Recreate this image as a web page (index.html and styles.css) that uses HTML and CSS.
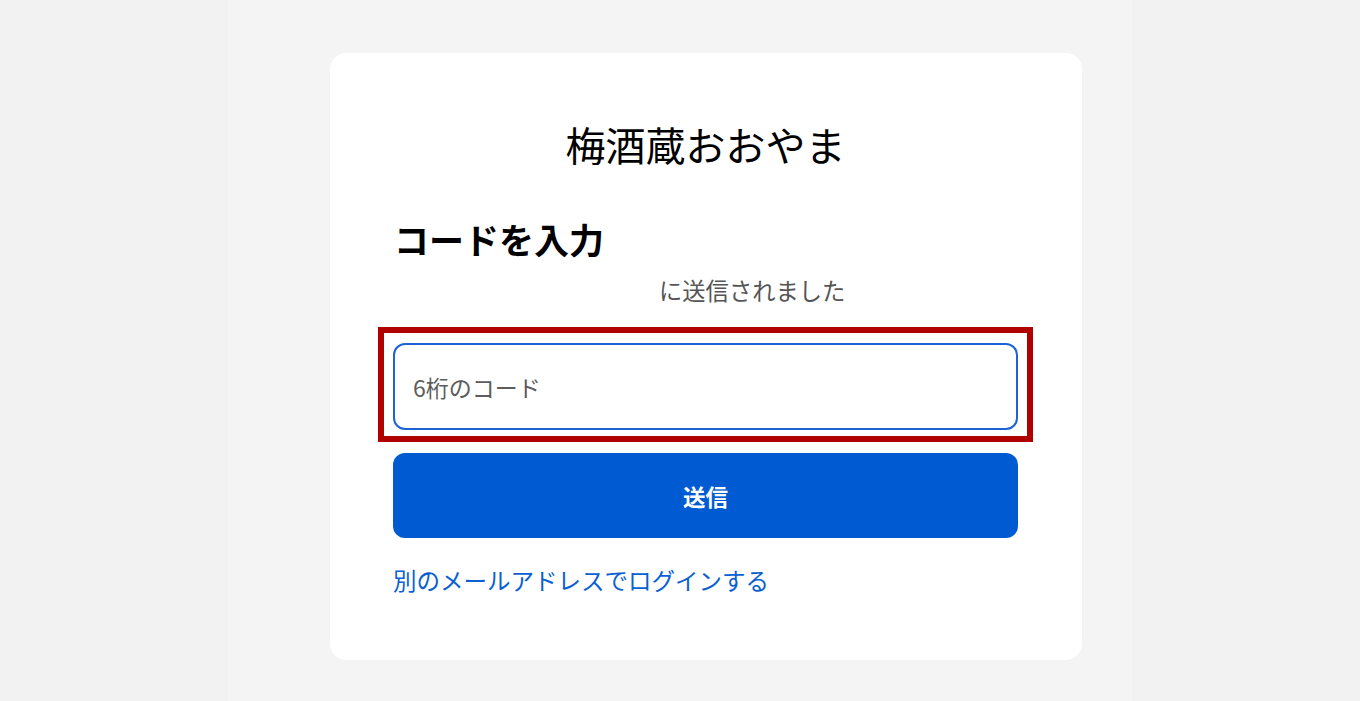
FILE: index.html
```html
<!DOCTYPE html>
<html lang="ja">
<head>
<meta charset="utf-8">
<title>梅酒蔵おおやま</title>
<link rel="stylesheet" href="styles.css">
</head>
<body>
<main class="column">
  <section class="card">
    <h1 class="shop">梅酒蔵おおやま</h1>
    <h2 class="heading">コードを入力</h2>
    <p class="sent"><span class="email">user@mail.jp</span>に送信されました</p>
    <div class="field">
      <input class="code-input" type="text" placeholder="6桁のコード">
      <span class="highlight"></span>
    </div>
    <button class="submit" type="button">送信</button>
    <a class="alt-link" href="#">別のメールアドレスでログインする</a>
  </section>
</main>
</body>
</html>
```
FILE: styles.css
```css
* { box-sizing: border-box; }
html, body { margin: 0; padding: 0; }
body {
  background: #f2f2f2;
  font-family: "Noto Sans CJK JP", "Noto Sans", sans-serif;
  color: #000;
}
.column {
  width: 904px;
  min-height: 701px;
  margin: 0 auto;
  background: #f4f4f4;
  padding-top: 53px;
}
.card {
  width: 752px;
  margin: 0 0 0 102px;
  background: #fff;
  border-radius: 16px;
  padding: 63px 64px 64px 63px;
  display: flex;
  flex-direction: column;
}
.shop {
  margin: 0;
  font-size: 40px;
  line-height: 56px;
  font-weight: 400;
  text-align: center;
}
.heading {
  margin: 43px 0 0;
  font-size: 35px;
  line-height: 48px;
  font-weight: 700;
  padding-left: 1px;
}
.sent {
  margin: 11px 0 0;
  font-size: 23.3px;
  line-height: 32px;
  color: #555;
}
.email {
  display: inline-block;
  width: 266px;
  color: transparent;
  white-space: nowrap;
  vertical-align: top;
  user-select: none;
}
.field {
  position: relative;
  margin-top: 37px;
}
.code-input {
  display: block;
  width: 100%;
  height: 87px;
  border: 2px solid #1d63d8;
  border-radius: 12px;
  padding: 0 18px;
  font-family: inherit;
  font-size: 23px;
  color: #222;
  outline: none;
  background: #fff;
}
.code-input::placeholder { color: #5c5c5c; }
.highlight {
  position: absolute;
  left: -15px;
  top: -16px;
  width: 655px;
  height: 115px;
  border: 6px solid #b00000;
  pointer-events: none;
}
.submit {
  margin-top: 23px;
  height: 85px;
  border: none;
  border-radius: 12px;
  background: #005bd3;
  color: #fff;
  font-family: inherit;
  font-size: 22.5px;
  font-weight: 700;
}
.alt-link {
  margin-top: 26px;
  font-size: 23.5px;
  line-height: 32px;
  color: #0a5fd1;
  text-decoration: none;
  align-self: flex-start;
}
```
